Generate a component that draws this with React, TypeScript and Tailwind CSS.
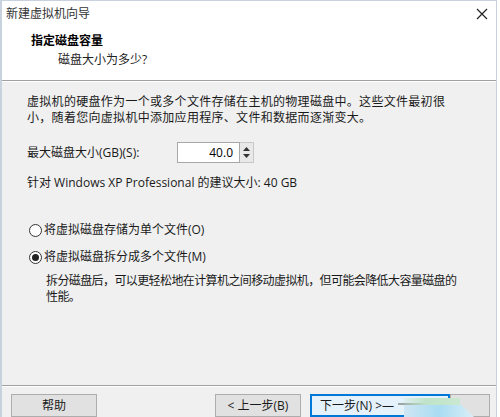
import React from "react";

export default function App() {
  return (
    <div
      className="w-[500px] h-[417px] bg-white overflow-hidden relative text-[12px] text-[#1a1a1a]"
      style={{ fontFamily: '"Open Sans", "Noto Sans CJK SC", sans-serif' }}
    >
      <div className="w-[497px] h-full border-l-2 border-r border-t border-[#c7d2de] flex flex-col">
        {/* Title bar */}
        <div className="h-[25px] bg-white flex items-center justify-between pl-[4px] pr-[6px]">
          <span className="text-[12px] text-[#333]">新建虚拟机向导</span>
          <svg width="12" height="12" viewBox="0 0 12 12" className="mr-[2px]">
            <path d="M1 1 L11 11 M11 1 L1 11" stroke="#222" strokeWidth="1.2" />
          </svg>
        </div>
        {/* Header */}
        <div className="h-[55px] bg-white pt-[5px] border-b border-[#a0a0a0]">
          <div className="pl-[29px] font-bold leading-[19px] text-[12px] text-black">指定磁盘容量</div>
          <div className="pl-[56px] leading-[19px] text-[12px] text-[#222]">磁盘大小为多少?</div>
        </div>
        {/* Body */}
        <div className="flex-1 bg-[#f0f0f0] border-t border-white flex flex-col">
          <div className="pl-[25px] pt-[12px] leading-[16px] whitespace-nowrap tracking-[0.3px]">
            <div>虚拟机的硬盘作为一个或多个文件存储在主机的物理磁盘中。这些文件最初很</div>
            <div>小，随着您向虚拟机中添加应用程序、文件和数据而逐渐变大。</div>
          </div>
          <div className="pl-[25px] mt-[16px] flex items-center h-[21px]">
            <span className="w-[150px]">最大磁盘大小(GB)(S):</span>
            <div className="flex h-[21px]">
              <div className="w-[63px] h-[21px] bg-white border border-[#a8a8a8] flex items-center justify-end pr-[6px] text-[12px] text-black">
                40.0
              </div>
              <div className="w-[14px] h-[21px] bg-[#e8e8e8] border border-[#c8c8c8] border-l-0 flex flex-col items-center justify-center gap-[3px]">
                <svg width="7" height="4" viewBox="0 0 7 4">
                  <path d="M0 4 L3.5 0 L7 4 Z" fill="#333" />
                </svg>
                <svg width="7" height="4" viewBox="0 0 7 4">
                  <path d="M0 0 L3.5 4 L7 0 Z" fill="#333" />
                </svg>
              </div>
            </div>
          </div>
          <div className="pl-[25px] mt-[12px] leading-[16px]">针对 Windows XP Professional 的建议大小: 40 GB</div>

          <div className="pl-[27px] mt-[31px] flex items-center h-[16px]">
            <div className="w-[13px] h-[13px] rounded-full border border-[#333] bg-white" />
            <span className="ml-[2px]">将虚拟磁盘存储为单个文件(O)</span>
          </div>
          <div className="pl-[27px] mt-[11px] flex items-center h-[16px]">
            <div className="w-[13px] h-[13px] rounded-full border border-[#333] bg-white flex items-center justify-center">
              <div className="w-[7px] h-[7px] rounded-full bg-[#222]" />
            </div>
            <span className="ml-[2px]">将虚拟磁盘拆分成多个文件(M)</span>
          </div>
          <div className="pl-[44px] mt-[8px] leading-[16px] whitespace-nowrap tracking-[-0.6px]">
            <div>拆分磁盘后，可以更轻松地在计算机之间移动虚拟机，但可能会降低大容量磁盘的</div>
            <div>性能。</div>
          </div>

          <div className="flex-1" />
          <div className="border-t border-[#a0a0a0] h-0" />
          <div className="border-t border-white h-[31px] flex items-end pl-[9px]">
            <div className="w-[86px] h-[23px] bg-[#e1e1e1] border border-[#adadad] flex items-center justify-center">
              帮助
            </div>
            <div className="ml-[118px] w-[86px] h-[23px] bg-[#e1e1e1] border border-[#adadad] flex items-center justify-center">
              &lt; 上一步(B)
            </div>
            <div className="ml-[9px] w-[140px] h-[23px] bg-[#e5f1fb] border-2 border-[#0078d7] flex items-center pl-[8px]">
              下一步(N) &gt;—
            </div>
            <div className="w-[40px] h-[23px] bg-[#e1e1e1] border border-[#adadad]" />
          </div>
        </div>
      </div>
      {/* watermark overlay */}
      <div className="absolute left-[398px] top-[398px] w-[82px] h-[19px] overflow-hidden pointer-events-none">
        <div className="absolute left-0 top-[5px] w-[60px] h-[2px] bg-[#9aa6a4]" />
        <div
          className="absolute left-[6px] top-0 w-[56px] h-[8px]"
          style={{ background: "linear-gradient(90deg, rgba(190,225,200,0.2), #bfe3c8 40%, #c9e8d0)" }}
        />
        <div
          className="absolute left-[6px] top-[7px] w-[70px] h-[12px]"
          style={{
            background: "linear-gradient(90deg, #cfe6f3, #a9dcf2 50%, #d9eef7)",
            clipPath: "polygon(0 0, 82% 0, 100% 100%, 0 100%)",
          }}
        />
      </div>
    </div>
  );
}
